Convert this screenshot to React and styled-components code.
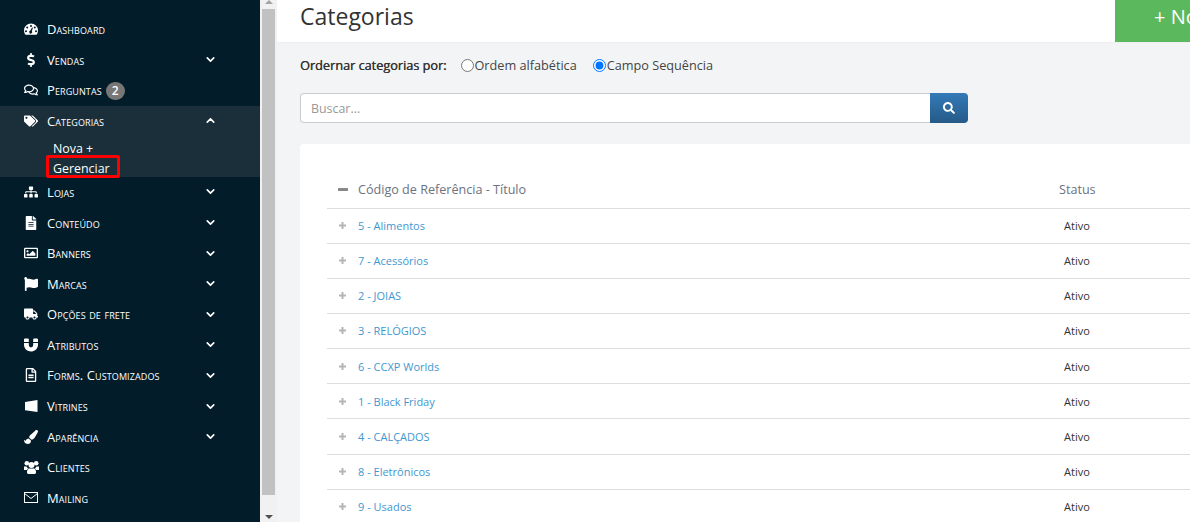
import React from "react";
import styled, { createGlobalStyle } from "styled-components";
import {
  FaDollarSign,
  FaRegComments,
  FaTags,
  FaSitemap,
  FaFileAlt,
  FaRegImage,
  FaFlag,
  FaTruck,
  FaMagnet,
  FaRegFileAlt,
  FaPaintBrush,
  FaSearch,
} from "react-icons/fa";
import { ChevronDown, ChevronUp } from "lucide-react";

const GlobalStyle = createGlobalStyle`
  html, body {
    margin: 0;
    height: 100%;
    overflow: hidden;
    font-family: "Open Sans", sans-serif;
  }
`;

const Page = styled.div`
  display: flex;
  height: 522px;
  width: 1190px;
  overflow: hidden;
  background: #f3f4f6;
`;

const Sidebar = styled.nav`
  flex: 0 0 260px;
  box-sizing: border-box;
  padding-top: 13.75px;
  background: #021c2a;
  color: #fff;
`;

const Group = styled.div`
  background: ${(p) => (p.$open ? "#1a2f3a" : "transparent")};
`;

const MenuRow = styled.div`
  display: flex;
  align-items: center;
  height: 30.6px;
  padding-left: 23px;
  padding-right: 43px;
  font-size: 13px;
  font-variant: small-caps;
  letter-spacing: 0.1px;
`;

const IconSlot = styled.span`
  display: flex;
  justify-content: center;
  flex: 0 0 16px;
  margin-right: 8px;
  font-size: 14px;
`;

const Label = styled.span`
  flex: 1;
`;

const Badge = styled.span`
  display: inline-block;
  margin-left: 4px;
  padding: 0 6px;
  border-radius: 10px;
  background: #777;
  font-size: 12px;
  font-weight: 600;
  font-variant: normal;
  line-height: 18px;
`;

const SubList = styled.div`
  box-sizing: border-box;
  height: 40.5px;
  padding-top: 2.5px;
`;

const SubItem = styled.div`
  position: relative;
  height: 20px;
  line-height: 20px;
  margin-left: 53px;
  font-size: 12.4px;

  ${(p) =>
    p.$marked &&
    `&::after {
      content: "";
      position: absolute;
      left: -7px;
      top: -4px;
      width: 74px;
      height: 23px;
      box-sizing: border-box;
      border: 3px solid #f00;
      border-radius: 2px;
    }`}
`;

const Scrollbar = styled.div`
  flex: 0 0 17px;
  box-sizing: border-box;
  display: flex;
  flex-direction: column;
  align-items: stretch;
  padding: 0 2px;
  background: #f1f1f1;
`;

const Arrow = styled.div`
  flex: 0 0 ${(p) => (p.$up ? "9px" : "10px")};
  display: flex;
  justify-content: center;
  align-items: ${(p) => (p.$up ? "flex-start" : "center")};
  &::after {
    content: "";
    border-left: 4px solid transparent;
    border-right: 4px solid transparent;
    ${(p) =>
      p.$up ? "border-bottom: 4px solid #a3a3a3;" : "border-top: 4px solid #505050;"}
  }
`;

const Thumb = styled.div`
  flex: 1;
  background: #c1c1c1;
  margin-bottom: 17px;
`;

const Main = styled.main`
  flex: 1;
  min-width: 0;
  overflow: hidden;
`;

const Header = styled.header`
  display: flex;
  justify-content: space-between;
  height: 42px;
  background: #fff;
  border-bottom: 1px solid #eceef0;
  padding-left: 23px;
`;

const Title = styled.h1`
  margin: 0;
  font-size: 23px;
  font-weight: 400;
  line-height: 32px;
  color: #333;
`;

const NewButton = styled.div`
  flex: 0 0 75px;
  overflow: hidden;
  white-space: nowrap;
  background: #5cb85c;
  color: #fff;
  font-size: 20px;
  line-height: 34px;
  padding-left: 39px;
  box-sizing: border-box;
`;

const Content = styled.div`
  padding: 0 0 0 23px;
`;

const SortRow = styled.div`
  display: flex;
  align-items: center;
  height: 18px;
  margin-top: 13px;
  font-size: 12.7px;
  color: #333;
`;

const SortTitle = styled.span`
  margin-right: 15px;
  text-shadow: 0.3px 0 0 #333;
`;

const RadioLabel = styled.label`
  display: flex;
  align-items: center;
  margin-right: 16px;
  color: #444;
`;

const Radio = styled.input`
  margin: 0 ${(p) => (p.defaultChecked ? "1px" : "0")} 0 0;
`;

const SearchRow = styled.div`
  display: flex;
  width: 668px;
  height: 30px;
  margin-top: 19px;
`;

const SearchInput = styled.input`
  flex: 1;
  box-sizing: border-box;
  padding: 0 10px;
  border: 1px solid #ccc;
  border-right: 0;
  border-radius: 4px 0 0 4px;
  background: #fff;
  font-family: inherit;
  font-size: 12.4px;
  &::placeholder {
    color: #999;
  }
`;

const SearchButton = styled.button`
  flex: 0 0 38px;
  display: flex;
  align-items: center;
  justify-content: center;
  border: 0;
  border-radius: 0 4px 4px 0;
  background: linear-gradient(#337ab7, #265a88);
  color: #fff;
  font-size: 12px;
`;

const Card = styled.section`
  margin-top: 21px;
  padding: 27px 0 0 27px;
  background: #fff;
  border-radius: 4px 0 0 0;
`;

const Row = styled.div`
  display: flex;
  align-items: center;
  box-sizing: content-box;
  height: ${(p) => (p.$head ? "37px" : "33.4px")};
  padding-bottom: ${(p) => (p.$head ? "0" : "0.7px")};
  border-bottom: 1px solid #ddd;
`;

const Toggle = styled.span`
  display: flex;
  justify-content: center;
  flex: 0 0 31px;
  color: ${(p) => (p.$head ? "#888" : "#b5b5b5")};
`;

const NameCell = styled.span`
  flex: 0 0 701px;
  font-size: ${(p) => (p.$head ? "12.6px" : "11px")};
  color: ${(p) => (p.$head ? "#6b7280" : "#3f97d0")};
`;

const StatusCell = styled.span`
  padding-left: ${(p) => (p.$head ? "0" : "5px")};
  font-size: ${(p) => (p.$head ? "12.6px" : "11px")};
  color: ${(p) => (p.$head ? "#6b7280" : "#333")};
`;

const DashboardIcon = () => (
  <svg width="14" height="12" viewBox="0 0 14 12" fill="currentColor">
    <path
      fillRule="evenodd"
      d="M7 .5A7 7 0 0 1 14 7.5c0 1.5-.4 2.8-1 3.8l-.7.4H1.7L1 11.3C.4 10.300 0 9 0 7.500A7 7 0 0 1 7 .500ZM7 2a1 1 0 1 0 0 2 1 1 0 0 0 0-2ZM3.200 3.600a1 1 0 1 0 0 2 1 1 0 0 0 0-2ZM10.800 3.600a1 1 0 1 0 0 2 1 1 0 0 0 0-2ZM2 7.300a1 1 0 1 0 0 2 1 1 0 0 0 0-2ZM12 7.300a1 1 0 1 0 0 2 1 1 0 0 0 0-2ZM8 4.500 6.300 7.600a1.500 1.500 0 1 0 1.500.400L9 4.800Z"
    />
  </svg>
);

const WindowsIcon = () => (
  <svg width="13" height="12" viewBox="0 0 13 12" fill="currentColor">
    <path d="M0 2 12.500 0V12L0 10.300Z" />
  </svg>
);

const UsersIcon = () => (
  <svg width="15" height="13" viewBox="0 0 15 13" fill="currentColor">
    <circle cx="2.800" cy="2.300" r="2.300" />
    <circle cx="12.200" cy="2.300" r="2.300" />
    <circle cx="7.500" cy="4" r="3" />
    <path d="M0 5.500h2.500L4 7.500 3 9H0ZM15 5.500h-2.500L11 7.500 12 9h3Z" />
    <path d="M4.500 7.500h6L12 10v2l-1 1H4l-1-1v-2Z" />
  </svg>
);

const MailIcon = () => (
  <svg width="14" height="11" viewBox="0 0 14 11" fill="none" stroke="currentColor">
    <rect x="0.500" y="0.500" width="13" height="10" />
    <path d="M.500 1.500 7 6.500l6.500-5" />
  </svg>
);

const PlusIcon = () => (
  <svg width="7" height="7" viewBox="0 0 7 7" fill="currentColor">
    <path d="M2.500 0h2v2.500H7v2H4.500V7h-2V4.500H0v-2h2.500Z" />
  </svg>
);

const MinusIcon = () => (
  <svg width="10" height="3" viewBox="0 0 10 3" fill="currentColor">
    <rect width="10" height="3" rx="0.5" />
  </svg>
);

const menu = [
  { label: "Dashboard", Icon: DashboardIcon },
  { label: "Vendas", Icon: FaDollarSign, more: true },
  { label: "Perguntas", Icon: FaRegComments, badge: 2 },
  { label: "Categorias", Icon: FaTags, open: true, subs: ["Nova +", "Gerenciar"] },
  { label: "Lojas", Icon: FaSitemap, more: true },
  { label: "Conteúdo", Icon: FaFileAlt, more: true },
  { label: "Banners", Icon: FaRegImage, more: true },
  { label: "Marcas", Icon: FaFlag, more: true },
  { label: "Opções de frete", Icon: FaTruck, more: true },
  { label: "Atributos", Icon: FaMagnet, more: true },
  { label: "Forms. Customizados", Icon: FaRegFileAlt, more: true },
  { label: "Vitrines", Icon: WindowsIcon, more: true },
  { label: "Aparência", Icon: FaPaintBrush, more: true },
  { label: "Clientes", Icon: UsersIcon },
  { label: "Mailing", Icon: MailIcon },
];

const categories = [
  "5 - Alimentos",
  "7 - Acessórios",
  "2 - JOIAS",
  "3 - RELÓGIOS",
  "6 - CCXP Worlds",
  "1 - Black Friday",
  "4 - CALÇADOS",
  "8 - Eletrônicos",
  "9 - Usados",
];

export default function App() {
  return (
    <Page>
      <GlobalStyle />
      <Sidebar>
        {menu.map(({ label, Icon, more, badge, open, subs }) => (
          <Group key={label} $open={open}>
            <MenuRow>
              <IconSlot>
                <Icon />
              </IconSlot>
              <Label>
                {label}
                {badge && <Badge>{badge}</Badge>}
              </Label>
              {more && <ChevronDown size={13} strokeWidth={3} />}
              {open && <ChevronUp size={13} strokeWidth={3} />}
            </MenuRow>
            {subs && (
              <SubList>
                {subs.map((s) => (
                  <SubItem key={s} $marked={s === "Gerenciar"}>
                    {s}
                  </SubItem>
                ))}
              </SubList>
            )}
          </Group>
        ))}
      </Sidebar>
      <Scrollbar>
        <Arrow $up />
        <Thumb />
        <Arrow />
      </Scrollbar>
      <Main>
        <Header>
          <Title>Categorias</Title>
          <NewButton>+ Nova</NewButton>
        </Header>
        <Content>
          <SortRow>
            <SortTitle>Ordernar categorias por:</SortTitle>
            <RadioLabel>
              <Radio type="radio" name="order" />
              Ordem alfabética
            </RadioLabel>
            <RadioLabel>
              <Radio type="radio" name="order" defaultChecked />
              Campo Sequência
            </RadioLabel>
          </SortRow>
          <SearchRow>
            <SearchInput placeholder="Buscar..." />
            <SearchButton>
              <FaSearch />
            </SearchButton>
          </SearchRow>
          <Card>
            <Row $head>
              <Toggle $head>
                <MinusIcon />
              </Toggle>
              <NameCell $head>Código de Referência - Título</NameCell>
              <StatusCell $head>Status</StatusCell>
            </Row>
            {categories.map((c) => (
              <Row key={c}>
                <Toggle>
                  <PlusIcon />
                </Toggle>
                <NameCell>{c}</NameCell>
                <StatusCell>Ativo</StatusCell>
              </Row>
            ))}
          </Card>
        </Content>
      </Main>
    </Page>
  );
}
